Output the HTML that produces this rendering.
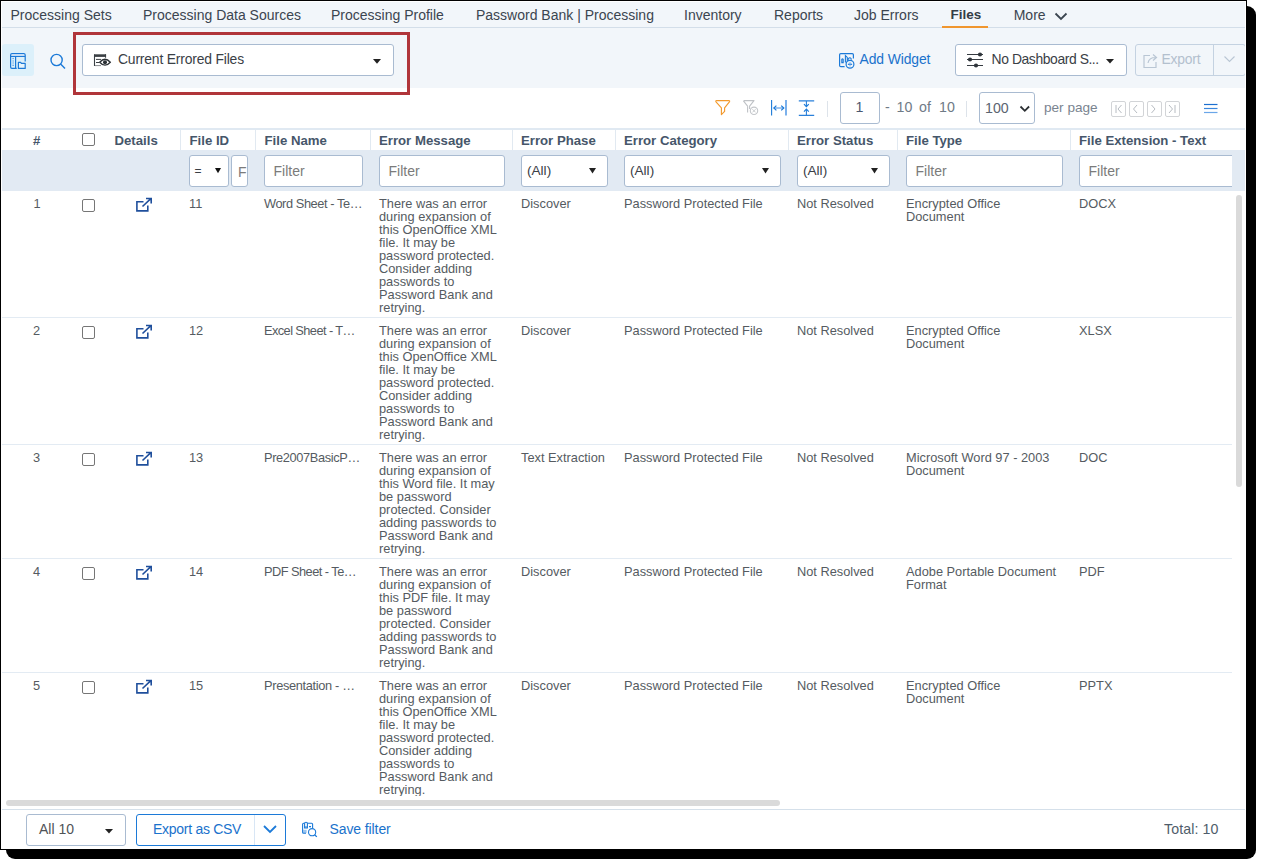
<!DOCTYPE html><html><head><meta charset="utf-8"><style>
*{box-sizing:border-box;margin:0;padding:0}
html,body{width:1262px;height:865px;overflow:hidden;background:#fff;font-family:"Liberation Sans",sans-serif}
.a{position:absolute}
.t{position:absolute;white-space:nowrap;line-height:1}
.nav{color:#3b4550;font-size:14px}
.box{position:absolute;border:1px solid #b3c3d6;border-radius:3px;background:#fff}
.hdr{position:absolute;white-space:nowrap;line-height:1;font-size:13.2px;font-weight:bold;color:#46566a}
.cell{position:absolute;white-space:nowrap;font-size:12.8px;color:#555b61;line-height:13px}
.ph{position:absolute;white-space:nowrap;line-height:1;color:#7b7b7b;font-size:14px}
.sep{position:absolute;width:1px;background:#e1e9f1}
.rl{position:absolute;height:1px;background:#e3ebf3;left:2px;width:1230px}
.cb{position:absolute;width:13px;height:13px;border:1.5px solid #767676;border-radius:2px;background:#fff}
svg{position:absolute;overflow:visible}
</style></head><body>
<div class="a" style="left:6px;top:6px;width:1250px;height:853px;background:#000;border-radius:9px"></div>
<div class="a" style="left:0;top:0;width:1247px;height:850px;background:#000"></div>
<div class="a" style="left:1px;top:1px;width:1245px;height:848px;background:#fff"></div>
<div class="a" style="left:0;top:0;width:1247px;height:850px;clip-path:inset(2px 2px 1px 2px)">
<div class="a" style="left:0;top:0;width:1247px;height:88px;background:#f2f6fa"></div>
<div class="a" style="left:2px;top:27px;width:1245px;height:1px;background:#d3dee9"></div>
<div class="t nav" style="left:10.5px;top:8px">Processing Sets</div>
<div class="t nav" style="left:143px;top:8px">Processing Data Sources</div>
<div class="t nav" style="left:331px;top:8px">Processing Profile</div>
<div class="t nav" style="left:476px;top:8px">Password Bank | Processing</div>
<div class="t nav" style="left:684px;top:8px">Inventory</div>
<div class="t nav" style="left:774px;top:8px">Reports</div>
<div class="t nav" style="left:854px;top:8px">Job Errors</div>
<div class="t nav" style="left:1013.7px;top:8px">More</div>
<div class="t nav" style="left:950.5px;top:8px;font-weight:bold;font-size:13.5px;color:#333d47">Files</div>
<div class="a" style="left:942px;top:26px;width:46px;height:2px;background:#f0962e"></div>
<svg style="left:1054px;top:10.8px" width="14" height="10"><path d="M1.5 2.5 L7 8 L12.5 2.5" fill="none" stroke="#3b4550" stroke-width="1.8"/></svg>
<div class="a" style="left:2px;top:44px;width:32px;height:32px;background:#dcf0fa;border-radius:3px"></div>
<svg style="left:10px;top:53px" width="16" height="16" viewBox="0 0 16 16"><rect x="0.6" y="0.6" width="14.6" height="2.7" fill="#fff"/><path d="M15.2 8.6 V2 Q15.2 0.6 13.8 0.6 H2 Q0.6 0.6 0.6 2 V14 Q0.6 15.4 2 15.4 H6.7" fill="none" stroke="#1c7ad8" stroke-width="1.2"/><path d="M0.6 3.3 H15.2 M5.6 3.3 V15.4" fill="none" stroke="#1c7ad8" stroke-width="1.2"/><rect x="2.6" y="4.9" width="1" height="1" fill="#1c7ad8"/><rect x="2.6" y="6.8" width="1" height="4.6" fill="#80b8ec"/><rect x="2.6" y="11.9" width="1" height="1" fill="#1c7ad8"/><path d="M8.4 15.4 V9.3 H10.6 L11.4 10.4 H15.2 V15.4 Z" fill="#e6f4fb" stroke="#1c7ad8" stroke-width="1.2" stroke-linejoin="round"/></svg>
<svg style="left:49px;top:52px" width="18" height="18" viewBox="0 0 18 18"><circle cx="7.6" cy="8" r="5.6" fill="none" stroke="#1c7ad8" stroke-width="1.4"/><path d="M11.6 12 L16 16.6" stroke="#1c7ad8" stroke-width="1.4"/></svg>
<div class="a" style="left:73px;top:32px;width:337px;height:63px;border:3px solid #b0353a"></div>
<div class="box" style="left:82px;top:44px;width:312px;height:32px;border-color:#a9bbd1"></div>
<svg style="left:90px;top:50px" width="24" height="20" viewBox="90 50 24 20"><path d="M94.5 66 V54.5" stroke="#3a3f44" stroke-width="1.1"/><rect x="94" y="54.3" width="12" height="2.6" fill="#3a3f44"/><rect x="105" y="54.3" width="1.1" height="3.4" fill="#3a3f44"/><path d="M96 59.4 H101 M96 62.5 H99" stroke="#3a3f44" stroke-width="1"/><path d="M95 65.6 H101" stroke="#8a8d90" stroke-width="1"/><path d="M99.7 62.2 Q105 56.3 110.3 62.2 Q105 68.1 99.7 62.2 Z" fill="#fff" stroke="#2a2f34" stroke-width="1.3"/><circle cx="105" cy="62.2" r="2" fill="#2a2f34"/></svg>
<div class="t" style="left:118px;top:52.8px;font-size:13.9px;letter-spacing:-0.18px;color:#3a4046">Current Errored Files</div>
<svg style="left:373px;top:58.8px" width="8" height="5"><path d="M0 0 H8 L4 4.8 Z" fill="#222"/></svg>
<svg style="left:834px;top:48px" width="28" height="24" viewBox="834 48 28 24"><path d="M844.6 66.6 H840.8 Q839.6 66.6 839.6 65.4 V54.8 Q839.6 53.6 840.8 53.6 H852.2 Q853.4 53.6 853.4 54.8 V58.6" fill="none" stroke="#1c7ad8" stroke-width="1.2"/><path d="M841.8 62.6 V59.4 Q842.5 58.4 843.2 59.4 V62.6 Z M845.4 62.6 V55.6 L847.3 57.4 V62.6 M848.4 59.8 V58.8 Q849.8 56.6 851.2 58.8 V59.8" fill="none" stroke="#1c7ad8" stroke-width="1.1"/><circle cx="850" cy="64.3" r="3.9" fill="#f2f6fa" stroke="#1c7ad8" stroke-width="1.2"/><path d="M847.9 64.3 H852.1" stroke="#1c7ad8" stroke-width="1.2"/><path d="M850 62.2 V66.4" stroke="#6aa6e8" stroke-width="1"/></svg>
<div class="t" style="left:859.5px;top:52.8px;font-size:13.9px;letter-spacing:-0.1px;color:#1a72cc">Add Widget</div>
<div class="box" style="left:955px;top:44px;width:172px;height:32px;border-color:#a9bbd1"></div>
<svg style="left:962px;top:48px" width="28" height="24" viewBox="962 48 28 24"><path d="M967 54.5 H983 M967 59.5 H983 M967 65.5 H983" stroke="#363b41" stroke-width="1.1"/><circle cx="980" cy="54.5" r="2.1" fill="#2f353b"/><circle cx="970" cy="59.5" r="2.1" fill="#2f353b"/><circle cx="976" cy="65.5" r="2.1" fill="#2f353b"/></svg>
<div class="t" style="left:991.5px;top:52.8px;font-size:13.9px;letter-spacing:-0.4px;color:#3a4046">No Dashboard S<span style="letter-spacing:-0.6px">...</span></div>
<svg style="left:1106px;top:59px" width="8" height="5"><path d="M0 0 H8 L4 4.5 Z" fill="#222"/></svg>
<div class="box" style="left:1135px;top:44px;width:111px;height:32px;border-color:#c4d2e1;background:#f2f6fa"></div>
<div class="a" style="left:1213px;top:44px;width:1px;height:32px;background:#c4d2e1"></div>
<svg style="left:1143px;top:52px" width="17" height="17" viewBox="0 0 17 17"><path d="M7 3.5 H1 V15.5 H13 V10" fill="none" stroke="#b9c6d4" stroke-width="1.2"/><path d="M5 11 Q6 5.5 12.5 5.5 M10 2.5 L13.5 5.5 L10 8.5" fill="none" stroke="#b9c6d4" stroke-width="1.2"/></svg>
<div class="t" style="left:1161.5px;top:52.8px;font-size:13.9px;letter-spacing:-0.2px;color:#b3c0ce">Export</div>
<svg style="left:1224px;top:56px" width="11" height="7"><path d="M0.5 0.5 L5.5 5.5 L10.5 0.5" fill="none" stroke="#b9c6d4" stroke-width="1.1"/></svg>
<svg style="left:710px;top:95px" width="110" height="25" viewBox="710 95 110 25"><path d="M716.6 100.6 H728.8 Q730.2 100.6 729.4 101.8 L724.6 107.8 V111.4 L721.4 114.6 V107.8 L716 101.8 Q715.3 100.6 716.6 100.6 Z" fill="none" stroke="#f29a2e" stroke-width="1.15" stroke-linejoin="round"/><path d="M743.6 100.6 H754 L749.6 106.2 V109 M747.6 106.2 L743.4 100.8 M747.6 106.2 V112.6" fill="none" stroke="#bfc2c6" stroke-width="1.1" stroke-linejoin="round"/><circle cx="754" cy="110.8" r="3.7" fill="#fff" stroke="#c4c7cb" stroke-width="1.1"/><path d="M752.4 109.2 L755.6 112.4 M755.6 109.2 L752.4 112.4" stroke="#c4c7cb" stroke-width="0.9"/><path d="M771.6 100 V115.6" stroke="#1c7ad8" stroke-width="1.1"/><path d="M786 100 V115.6" stroke="#5b9de6" stroke-width="1.6"/><path d="M774 108 H783.6" stroke="#6aa6e8" stroke-width="1.3"/><path d="M776.4 105.6 L773.8 108 L776.4 110.4 M781.2 105.6 L783.8 108 L781.2 110.4" fill="none" stroke="#1c7ad8" stroke-width="1.2"/><path d="M798.8 100.8 H814.2 M798.8 115.4 H814.2" stroke="#2a80da" stroke-width="1.2"/><path d="M806.4 101 V106.4 M806.4 109.4 V115" stroke="#2a80da" stroke-width="1.1"/><path d="M804 104.2 L806.4 106.6 L808.8 104.2 M804 111.6 L806.4 109.2 L808.8 111.6" fill="none" stroke="#1c7ad8" stroke-width="1.2"/></svg>
<div class="a" style="left:827px;top:101px;width:1px;height:16px;background:#dde3ea"></div>
<div class="box" style="left:840px;top:92px;width:40px;height:32px;border-color:#a9bbd1"></div>
<div class="t" style="left:855.5px;top:100px;font-size:14.2px;color:#4b5870">1</div>
<div class="t" style="left:885px;top:100px;font-size:14.2px;color:#6f7a86">-</div>
<div class="t" style="left:896.6px;top:100px;font-size:14.2px;color:#6f7a86">10</div>
<div class="t" style="left:919px;top:100px;font-size:14.2px;color:#6f7a86">of</div>
<div class="t" style="left:939px;top:100px;font-size:14.2px;color:#6f7a86">10</div>
<div class="a" style="left:966px;top:101px;width:1px;height:16px;background:#dde3ea"></div>
<div class="box" style="left:979px;top:92px;width:56px;height:32px;border-color:#a9bbd1"></div>
<div class="t" style="left:985px;top:100.6px;font-size:14.2px;color:#5b6471">100</div>
<svg style="left:1019px;top:104.5px" width="12" height="8"><path d="M1.5 1.5 L5.8 5.8 L10.1 1.5" fill="none" stroke="#2b2f33" stroke-width="1.8"/></svg>
<div class="t" style="left:1044px;top:100.8px;font-size:13.6px;color:#7a8490">per page</div>
<div class="a" style="left:1111px;top:101px;width:15px;height:16px;border:1px solid #d2d4d7;border-radius:2px"></div>
<div class="a" style="left:1129px;top:101px;width:15px;height:16px;border:1px solid #d2d4d7;border-radius:2px"></div>
<div class="a" style="left:1147px;top:101px;width:15px;height:16px;border:1px solid #d2d4d7;border-radius:2px"></div>
<div class="a" style="left:1165px;top:101px;width:15px;height:16px;border:1px solid #d2d4d7;border-radius:2px"></div>
<svg style="left:1111px;top:101px" width="70" height="16"><path d="M5 4 V12 M10.5 4 L7 8 L10.5 12" fill="none" stroke="#b7bcc2" stroke-width="1"/><path d="M26 4 L22.5 8 L26 12" fill="none" stroke="#b7bcc2" stroke-width="1"/><path d="M40.5 4 L44 8 L40.5 12" fill="none" stroke="#b7bcc2" stroke-width="1"/><path d="M58 4 L61.5 8 L58 12 M64 4 V12" fill="none" stroke="#b7bcc2" stroke-width="1"/></svg>
<svg style="left:1203.5px;top:103px" width="14" height="11"><path d="M0 1.5 H13.5" stroke="#1c6fd0" stroke-width="1.2"/><path d="M0 5.5 H13.5" stroke="#3a86dc" stroke-width="1.2"/><path d="M0 9.5 H13.5" stroke="#6aa6e8" stroke-width="1.2"/></svg>
<div class="a" style="left:2px;top:128px;width:1245px;height:2px;background:#e0e9f2"></div>
<div class="sep" style="left:180px;top:130px;height:20px"></div>
<div class="sep" style="left:255px;top:130px;height:20px"></div>
<div class="sep" style="left:370px;top:130px;height:20px"></div>
<div class="sep" style="left:512px;top:130px;height:20px"></div>
<div class="sep" style="left:615px;top:130px;height:20px"></div>
<div class="sep" style="left:788px;top:130px;height:20px"></div>
<div class="sep" style="left:897px;top:130px;height:20px"></div>
<div class="sep" style="left:1070px;top:130px;height:20px"></div>
<div class="hdr" style="left:33px;top:133.5px">#</div>
<div class="hdr" style="left:114.5px;top:133.5px">Details</div>
<div class="hdr" style="left:189.5px;top:133.5px">File ID</div>
<div class="hdr" style="left:264.5px;top:133.5px">File Name</div>
<div class="hdr" style="left:379px;top:133.5px">Error Message</div>
<div class="hdr" style="left:521px;top:133.5px">Error Phase</div>
<div class="hdr" style="left:624px;top:133.5px">Error Category</div>
<div class="hdr" style="left:797px;top:133.5px">Error Status</div>
<div class="hdr" style="left:906px;top:133.5px">File Type</div>
<div class="hdr" style="left:1079px;top:133.5px">File Extension - Text</div>
<div class="cb" style="left:82px;top:133px"></div>
<div class="a" style="left:2px;top:150px;width:1245px;height:41px;background:#e2eaf3"></div>
<div class="box" style="left:189px;top:155px;width:40px;height:32px;border-color:#a9bbd1"></div>
<div class="t" style="left:194.5px;top:164.5px;font-size:12px;color:#3a4046">=</div>
<svg style="left:215px;top:168px" width="6" height="6"><path d="M0 0 H6 L3 5.3 Z" fill="#111"/></svg>
<div class="a" style="left:231px;top:155px;width:17px;height:32px;border:1px solid #a9bbd1;border-radius:3px;background:#fff;overflow:hidden"><div class="ph" style="left:6px;top:8.5px">F</div></div>
<div class="box" style="left:264px;top:155px;width:99px;height:32px;border-color:#a9bbd1"></div>
<div class="ph" style="left:273.5px;top:163.5px">Filter</div>
<div class="box" style="left:379px;top:155px;width:126px;height:32px;border-color:#a9bbd1"></div>
<div class="ph" style="left:388.5px;top:163.5px">Filter</div>
<div class="box" style="left:521px;top:155px;width:87px;height:32px;border-color:#a9bbd1"></div>
<div class="t" style="left:527px;top:164px;font-size:13.6px;color:#3a4046">(All)</div>
<svg style="left:589px;top:168px" width="7" height="6"><path d="M0 0 H7 L3.5 5.5 Z" fill="#222"/></svg>
<div class="box" style="left:624px;top:155px;width:157px;height:32px;border-color:#a9bbd1"></div>
<div class="t" style="left:630px;top:164px;font-size:13.6px;color:#3a4046">(All)</div>
<svg style="left:762px;top:168px" width="7" height="6"><path d="M0 0 H7 L3.5 5.5 Z" fill="#222"/></svg>
<div class="box" style="left:797px;top:155px;width:93px;height:32px;border-color:#a9bbd1"></div>
<div class="t" style="left:803px;top:164px;font-size:13.6px;color:#3a4046">(All)</div>
<svg style="left:871px;top:168px" width="7" height="6"><path d="M0 0 H7 L3.5 5.5 Z" fill="#222"/></svg>
<div class="box" style="left:906px;top:155px;width:157px;height:32px;border-color:#a9bbd1"></div>
<div class="ph" style="left:915.5px;top:163.5px">Filter</div>
<div class="a" style="left:1079px;top:155px;width:153px;height:32px;overflow:hidden"><div class="box" style="left:0;top:0;width:170px;height:32px;border-color:#a9bbd1"></div></div>
<div class="ph" style="left:1088.5px;top:163.5px">Filter</div>
<div class="a" style="left:0;top:191px;width:1247px;height:605px;overflow:hidden">
<div class="cell" style="left:33.5px;top:6px">1</div>
<div class="cb" style="left:82px;top:8px"></div>
<svg style="left:136px;top:6px" width="17" height="16" viewBox="0 0 17 16"><path d="M7.5 4.7 H0.9 V13.9 H11.8 V8.5" fill="none" stroke="#1f4f9c" stroke-width="1.6"/><path d="M6.5 9.5 L14.8 1.7 M10 1.5 H15.2 V6.6" fill="none" stroke="#1f4f9c" stroke-width="1.6"/></svg>
<div class="cell" style="left:189px;top:6px">11</div>
<div class="cell" style="left:264px;top:6px;letter-spacing:-0.42px">Word Sheet - Te…</div>
<div class="cell" style="left:379px;top:6px">There was an error<br>during expansion of<br>this OpenOffice XML<br>file. It may be<br>password protected.<br>Consider adding<br>passwords to<br>Password Bank and<br>retrying.</div>
<div class="cell" style="left:521px;top:6px">Discover</div>
<div class="cell" style="left:624px;top:6px">Password Protected File</div>
<div class="cell" style="left:797px;top:6px">Not Resolved</div>
<div class="cell" style="left:906px;top:6px">Encrypted Office<br>Document</div>
<div class="cell" style="left:1079px;top:6px">DOCX</div>
<div class="rl" style="top:126px"></div>
<div class="cell" style="left:33px;top:133px">2</div>
<div class="cb" style="left:82px;top:135px"></div>
<svg style="left:136px;top:133px" width="17" height="16" viewBox="0 0 17 16"><path d="M7.5 4.7 H0.9 V13.9 H11.8 V8.5" fill="none" stroke="#1f4f9c" stroke-width="1.6"/><path d="M6.5 9.5 L14.8 1.7 M10 1.5 H15.2 V6.6" fill="none" stroke="#1f4f9c" stroke-width="1.6"/></svg>
<div class="cell" style="left:189px;top:133px">12</div>
<div class="cell" style="left:264px;top:133px;letter-spacing:-0.58px">Excel Sheet - T…</div>
<div class="cell" style="left:379px;top:133px">There was an error<br>during expansion of<br>this OpenOffice XML<br>file. It may be<br>password protected.<br>Consider adding<br>passwords to<br>Password Bank and<br>retrying.</div>
<div class="cell" style="left:521px;top:133px">Discover</div>
<div class="cell" style="left:624px;top:133px">Password Protected File</div>
<div class="cell" style="left:797px;top:133px">Not Resolved</div>
<div class="cell" style="left:906px;top:133px">Encrypted Office<br>Document</div>
<div class="cell" style="left:1079px;top:133px">XLSX</div>
<div class="rl" style="top:253px"></div>
<div class="cell" style="left:33px;top:260px">3</div>
<div class="cb" style="left:82px;top:262px"></div>
<svg style="left:136px;top:260px" width="17" height="16" viewBox="0 0 17 16"><path d="M7.5 4.7 H0.9 V13.9 H11.8 V8.5" fill="none" stroke="#1f4f9c" stroke-width="1.6"/><path d="M6.5 9.5 L14.8 1.7 M10 1.5 H15.2 V6.6" fill="none" stroke="#1f4f9c" stroke-width="1.6"/></svg>
<div class="cell" style="left:189px;top:260px">13</div>
<div class="cell" style="left:264px;top:260px;letter-spacing:-0.36px">Pre2007BasicP…</div>
<div class="cell" style="left:379px;top:260px">There was an error<br>during expansion of<br>this Word file. It may<br>be password<br>protected. Consider<br>adding passwords to<br>Password Bank and<br>retrying.</div>
<div class="cell" style="left:521px;top:260px">Text Extraction</div>
<div class="cell" style="left:624px;top:260px">Password Protected File</div>
<div class="cell" style="left:797px;top:260px">Not Resolved</div>
<div class="cell" style="left:906px;top:260px">Microsoft Word 97 - 2003<br>Document</div>
<div class="cell" style="left:1079px;top:260px">DOC</div>
<div class="rl" style="top:367px"></div>
<div class="cell" style="left:33px;top:374px">4</div>
<div class="cb" style="left:82px;top:376px"></div>
<svg style="left:136px;top:374px" width="17" height="16" viewBox="0 0 17 16"><path d="M7.5 4.7 H0.9 V13.9 H11.8 V8.5" fill="none" stroke="#1f4f9c" stroke-width="1.6"/><path d="M6.5 9.5 L14.8 1.7 M10 1.5 H15.2 V6.6" fill="none" stroke="#1f4f9c" stroke-width="1.6"/></svg>
<div class="cell" style="left:189px;top:374px">14</div>
<div class="cell" style="left:264px;top:374px;letter-spacing:-0.53px">PDF Sheet - Te…</div>
<div class="cell" style="left:379px;top:374px">There was an error<br>during expansion of<br>this PDF file. It may<br>be password<br>protected. Consider<br>adding passwords to<br>Password Bank and<br>retrying.</div>
<div class="cell" style="left:521px;top:374px">Discover</div>
<div class="cell" style="left:624px;top:374px">Password Protected File</div>
<div class="cell" style="left:797px;top:374px">Not Resolved</div>
<div class="cell" style="left:906px;top:374px">Adobe Portable Document<br>Format</div>
<div class="cell" style="left:1079px;top:374px">PDF</div>
<div class="rl" style="top:481px"></div>
<div class="cell" style="left:33px;top:488px">5</div>
<div class="cb" style="left:82px;top:490px"></div>
<svg style="left:136px;top:488px" width="17" height="16" viewBox="0 0 17 16"><path d="M7.5 4.7 H0.9 V13.9 H11.8 V8.5" fill="none" stroke="#1f4f9c" stroke-width="1.6"/><path d="M6.5 9.5 L14.8 1.7 M10 1.5 H15.2 V6.6" fill="none" stroke="#1f4f9c" stroke-width="1.6"/></svg>
<div class="cell" style="left:189px;top:488px">15</div>
<div class="cell" style="left:264px;top:488px;letter-spacing:-0.33px">Presentation - …</div>
<div class="cell" style="left:379px;top:488px">There was an error<br>during expansion of<br>this OpenOffice XML<br>file. It may be<br>password protected.<br>Consider adding<br>passwords to<br>Password Bank and<br>retrying.</div>
<div class="cell" style="left:521px;top:488px">Discover</div>
<div class="cell" style="left:624px;top:488px">Password Protected File</div>
<div class="cell" style="left:797px;top:488px">Not Resolved</div>
<div class="cell" style="left:906px;top:488px">Encrypted Office<br>Document</div>
<div class="cell" style="left:1079px;top:488px">PPTX</div>
</div>
<div class="a" style="left:1236px;top:195px;width:6px;height:292px;background:#dadada;border-radius:3px"></div>
<div class="a" style="left:2px;top:796px;width:1245px;height:13px;background:#fff"></div>
<div class="a" style="left:6px;top:800px;width:774px;height:6px;background:#dadada;border-radius:3px"></div>
<div class="a" style="left:2px;top:809px;width:1245px;height:1px;background:#d5e0ea"></div>
<div class="box" style="left:26px;top:814px;width:100px;height:32px;border-color:#a9bbd1"></div>
<div class="t" style="left:39px;top:822.3px;font-size:14px;color:#505357">All 10</div>
<svg style="left:105px;top:829px" width="8" height="5"><path d="M0 0 H8 L4 4.6 Z" fill="#222"/></svg>
<div class="box" style="left:136px;top:814px;width:150px;height:32px;border-color:#1c7ad8"></div>
<div class="a" style="left:254px;top:815px;width:1px;height:30px;background:#d8e6f5"></div>
<div class="t" style="left:153px;top:822.3px;font-size:14px;letter-spacing:-0.28px;color:#1a72cc">Export as CSV</div>
<svg style="left:263px;top:825px" width="14" height="9"><path d="M1 1 L7 7 L13 1" fill="none" stroke="#1c7ad8" stroke-width="1.8"/></svg>
<svg style="left:296px;top:816px" width="28" height="26" viewBox="296 816 28 26"><rect x="303.2" y="829.8" width="3.4" height="3.2" fill="#9cc6f0"/><path d="M306 833.2 H303.6 Q302.6 833.2 302.6 832.2 V824.2 Q302.6 823.2 303.6 823.2 H311.6 Q312.6 823.2 312.6 824.2 V828" fill="none" stroke="#1c7ad8" stroke-width="1.1"/><path d="M304.6 828 V823.6 Q304.6 822.2 306 822.2 Q307.4 822.2 307.4 823.6 V828 Z" fill="#fff" stroke="#1c7ad8" stroke-width="1.1"/><path d="M304.8 827 H307.2 M309 826.6 H311" stroke="#1c7ad8" stroke-width="1.1"/><circle cx="312.1" cy="832.2" r="3.6" fill="#fff" stroke="#1c7ad8" stroke-width="1.1"/><path d="M314.7 834.8 L316.8 836.9" stroke="#1c7ad8" stroke-width="1.3"/></svg>
<div class="t" style="left:329.5px;top:822.3px;font-size:14px;letter-spacing:-0.1px;color:#1a72cc">Save filter</div>
<div class="t" style="left:1164px;top:822.3px;font-size:14.2px;letter-spacing:0.1px;color:#4f5d6b">Total: 10</div>
</div>
</body></html>
